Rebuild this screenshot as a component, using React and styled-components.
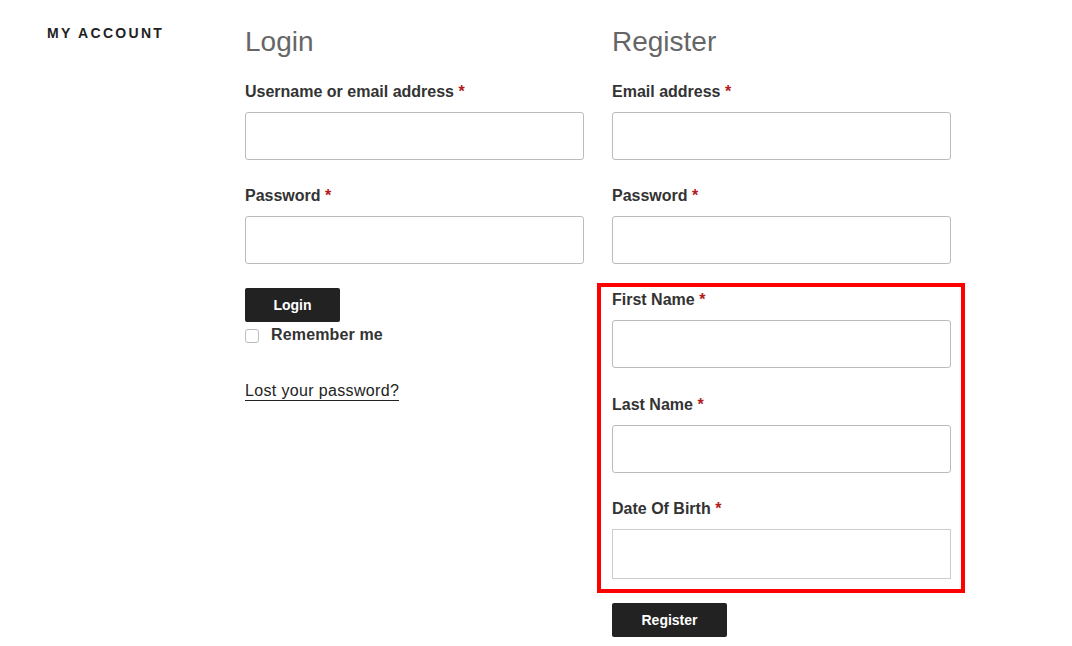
import React from "react";
import styled, { createGlobalStyle } from "styled-components";

const Global = createGlobalStyle`
  html, body { margin: 0; padding: 0; background: #fff; }
  body { font-family: "Liberation Sans", Arial, sans-serif; color: #333; }
  * { box-sizing: border-box; }
`;

const Page = styled.div`
  display: flex;
  width: 1072px;
  height: 646px;
  padding: 26px 0 0 47px;
  overflow: hidden;
`;

const SideTitle = styled.h1`
  width: 198px;
  margin: 0;
  font-size: 14px;
  font-weight: 800;
  letter-spacing: 0.165em;
  text-transform: uppercase;
  color: #222;
  line-height: 1;
`;

const Columns = styled.div`
  display: flex;
  gap: 28px;
`;

const Column = styled.div`
  width: 339px;
  display: flex;
  flex-direction: column;
`;

const Heading = styled.h2`
  margin: 0 0 24px;
  font-size: 28px;
  font-weight: 300;
  color: #666;
  line-height: 32px;
`;

const Field = styled.div`
  display: flex;
  flex-direction: column;
  margin-bottom: 26px;
`;

const Label = styled.label`
  font-size: 16px;
  font-weight: 700;
  color: #333;
  line-height: 20px;
  margin-bottom: 10px;
`;

const Req = styled.span`
  color: #b21c1c;
`;

const Input = styled.input`
  width: 339px;
  height: ${(p) => (p.$tall ? 50 : 48)}px;
  border: 1px solid ${(p) => (p.$square ? "#ccc" : "#bbb")};
  border-radius: ${(p) => (p.$square ? 0 : 3)}px;
  background: #fff;
  margin: 0;
  padding: 0 10px;
  font-size: 16px;
`;

const Highlight = styled.div`
  margin: -7px -14px 10px -15px;
  padding: 3px 10px 10px 11px;
  border: 4px solid #ff0000;
  display: flex;
  flex-direction: column;
  & > div:first-child { margin-bottom: 27px; }
  & > div:last-child { margin-bottom: 0; }
`;

const Button = styled.button`
  align-self: flex-start;
  height: 34px;
  width: ${(p) => p.$w}px;
  margin: ${(p) => p.$mt || 0}px 0 0;
  border: 0;
  border-radius: 2px;
  background: #222;
  color: #fff;
  font-family: "Liberation Sans", Arial, sans-serif;
  font-size: 14px;
  font-weight: 800;
  padding: 0;
`;

const Remember = styled.label`
  display: flex;
  align-items: flex-start;
  gap: 12px;
  margin-top: 3px;
  font-size: 16px;
  font-weight: 700;
  color: #333;
  line-height: 20px;
  letter-spacing: 0.15px;
`;

const Box = styled.span`
  width: 14px;
  height: 14px;
  border: 1px solid #bbb;
  border-radius: 3px;
  margin-top: 4px;
  background: #fff;
`;

const LostLink = styled.a`
  align-self: flex-start;
  margin-top: 36px;
  font-size: 16px;
  color: #222;
  text-decoration: none;
  line-height: 20px;
  letter-spacing: 0.35px;
  box-shadow: inset 0 -1px 0 #222;
`;

export default function App() {
  return (
    <>
      <Global />
      <Page>
        <SideTitle>My Account</SideTitle>
        <Columns>
          <Column>
            <Heading>Login</Heading>
            <Field>
              <Label>
                Username or email address <Req>*</Req>
              </Label>
              <Input />
            </Field>
            <Field>
              <Label>
                Password <Req>*</Req>
              </Label>
              <Input type="password" />
            </Field>
            <Button $w={95} $mt={-2}>Login</Button>
            <Remember>
              <Box />
              Remember me
            </Remember>
            <LostLink href="#">Lost your password?</LostLink>
          </Column>
          <Column>
            <Heading>Register</Heading>
            <Field>
              <Label>
                Email address <Req>*</Req>
              </Label>
              <Input />
            </Field>
            <Field>
              <Label>
                Password <Req>*</Req>
              </Label>
              <Input type="password" />
            </Field>
            <Highlight>
              <Field>
                <Label>
                  First Name <Req>*</Req>
                </Label>
                <Input />
              </Field>
              <Field>
                <Label>
                  Last Name <Req>*</Req>
                </Label>
                <Input />
              </Field>
              <Field>
                <Label>
                  Date Of Birth <Req>*</Req>
                </Label>
                <Input $square $tall />
              </Field>
            </Highlight>
            <Button $w={115}>Register</Button>
          </Column>
        </Columns>
      </Page>
    </>
  );
}
